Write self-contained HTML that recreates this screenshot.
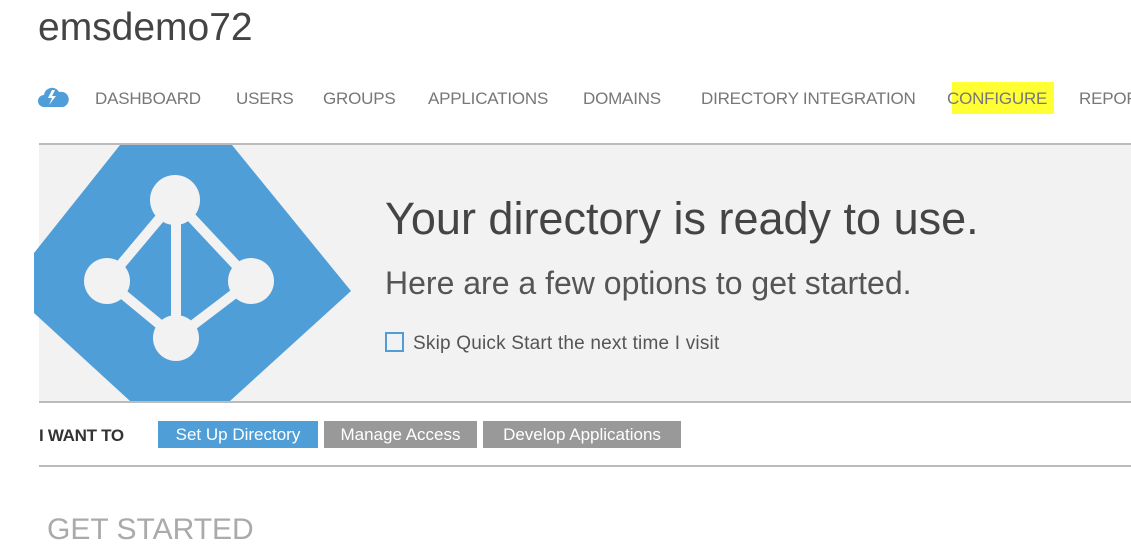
<!DOCTYPE html>
<html><head><style>
body{margin:0;width:1131px;height:536px;overflow:hidden;background:#fff;font-family:"Liberation Sans",sans-serif;position:relative}
.a{position:absolute;white-space:nowrap}
.nav{top:89px;font-size:17px;color:#777;letter-spacing:-0.2px}
</style></head><body>
<div class="a" style="left:38px;top:6px;font-size:39px;color:#444">emsdemo72</div>
<svg class="a" style="left:38px;top:86px" width="32" height="22" viewBox="0 0 32 22"><path d="M6 21a6 6 0 0 1 0-12a8 8 0 0 1 15-3a7 7 0 0 1 4 15z" fill="#509ed8"/><path d="M14 4l-4 8h4l-3 7l7-9h-4l3-6z" fill="#fff"/></svg>
<div class="a nav" style="left:95px">DASHBOARD</div>
<div class="a nav" style="left:236px">USERS</div>
<div class="a nav" style="left:323px">GROUPS</div>
<div class="a nav" style="left:428px">APPLICATIONS</div>
<div class="a nav" style="left:583px">DOMAINS</div>
<div class="a nav" style="left:701px">DIRECTORY INTEGRATION</div>
<div class="a" style="left:952px;top:82px;width:102px;height:32px;background:#ffff33"></div>
<div class="a nav" style="left:947px">CONFIGURE</div>
<div class="a nav" style="left:1079px">REPORTS</div>
<div class="a" style="left:39px;top:143px;width:1092px;height:2px;background:#bbb"></div>
<div class="a" style="left:39px;top:145px;width:1092px;height:256px;background:#f2f2f2"></div>
<svg class="a" style="left:0;top:145px" width="400" height="256" viewBox="0 145 400 256">
<polygon points="120,145 232,145 351,291 230,401 130,401 34,313 34,253" fill="#509ed8"/>
<g stroke="#f2f2f2" stroke-width="10" fill="none"><path d="M175,200L107,281L176,338L251,281Z M176,200V338"/></g>
<g fill="#f2f2f2"><circle cx="175" cy="200" r="25"/><circle cx="107" cy="281" r="23"/><circle cx="251" cy="281" r="23"/><circle cx="176" cy="338" r="23"/></g>
</svg>
<div class="a" style="left:385px;top:193px;font-size:45px;color:#444">Your directory is ready to use.</div>
<div class="a" style="left:385px;top:265px;font-size:32px;color:#555">Here are a few options to get started.</div>
<div class="a" style="left:385px;top:332px;width:19px;height:20px;border:2px solid #509ed8;box-sizing:border-box"></div>
<div class="a" style="left:413px;top:333px;font-size:19px;color:#555;letter-spacing:0.2px">Skip Quick Start the next time I visit</div>
<div class="a" style="left:39px;top:401px;width:1092px;height:2px;background:#bbb"></div>
<div class="a" style="left:39px;top:426px;font-size:17px;font-weight:bold;color:#333;letter-spacing:-0.3px">I WANT TO</div>
<div class="a" style="left:158px;top:421px;width:160px;height:27px;background:#509ed8;color:#fff;font-size:17px;line-height:27px;text-align:center">Set Up Directory</div>
<div class="a" style="left:324px;top:421px;width:153px;height:27px;background:#999;color:#fff;font-size:17px;line-height:27px;text-align:center">Manage Access</div>
<div class="a" style="left:483px;top:421px;width:198px;height:27px;background:#999;color:#fff;font-size:17px;line-height:27px;text-align:center">Develop Applications</div>
<div class="a" style="left:39px;top:465px;width:1092px;height:2px;background:#bbb"></div>
<div class="a" style="left:47px;top:513px;font-size:30px;color:#aaa">GET STARTED</div>
</body></html>
